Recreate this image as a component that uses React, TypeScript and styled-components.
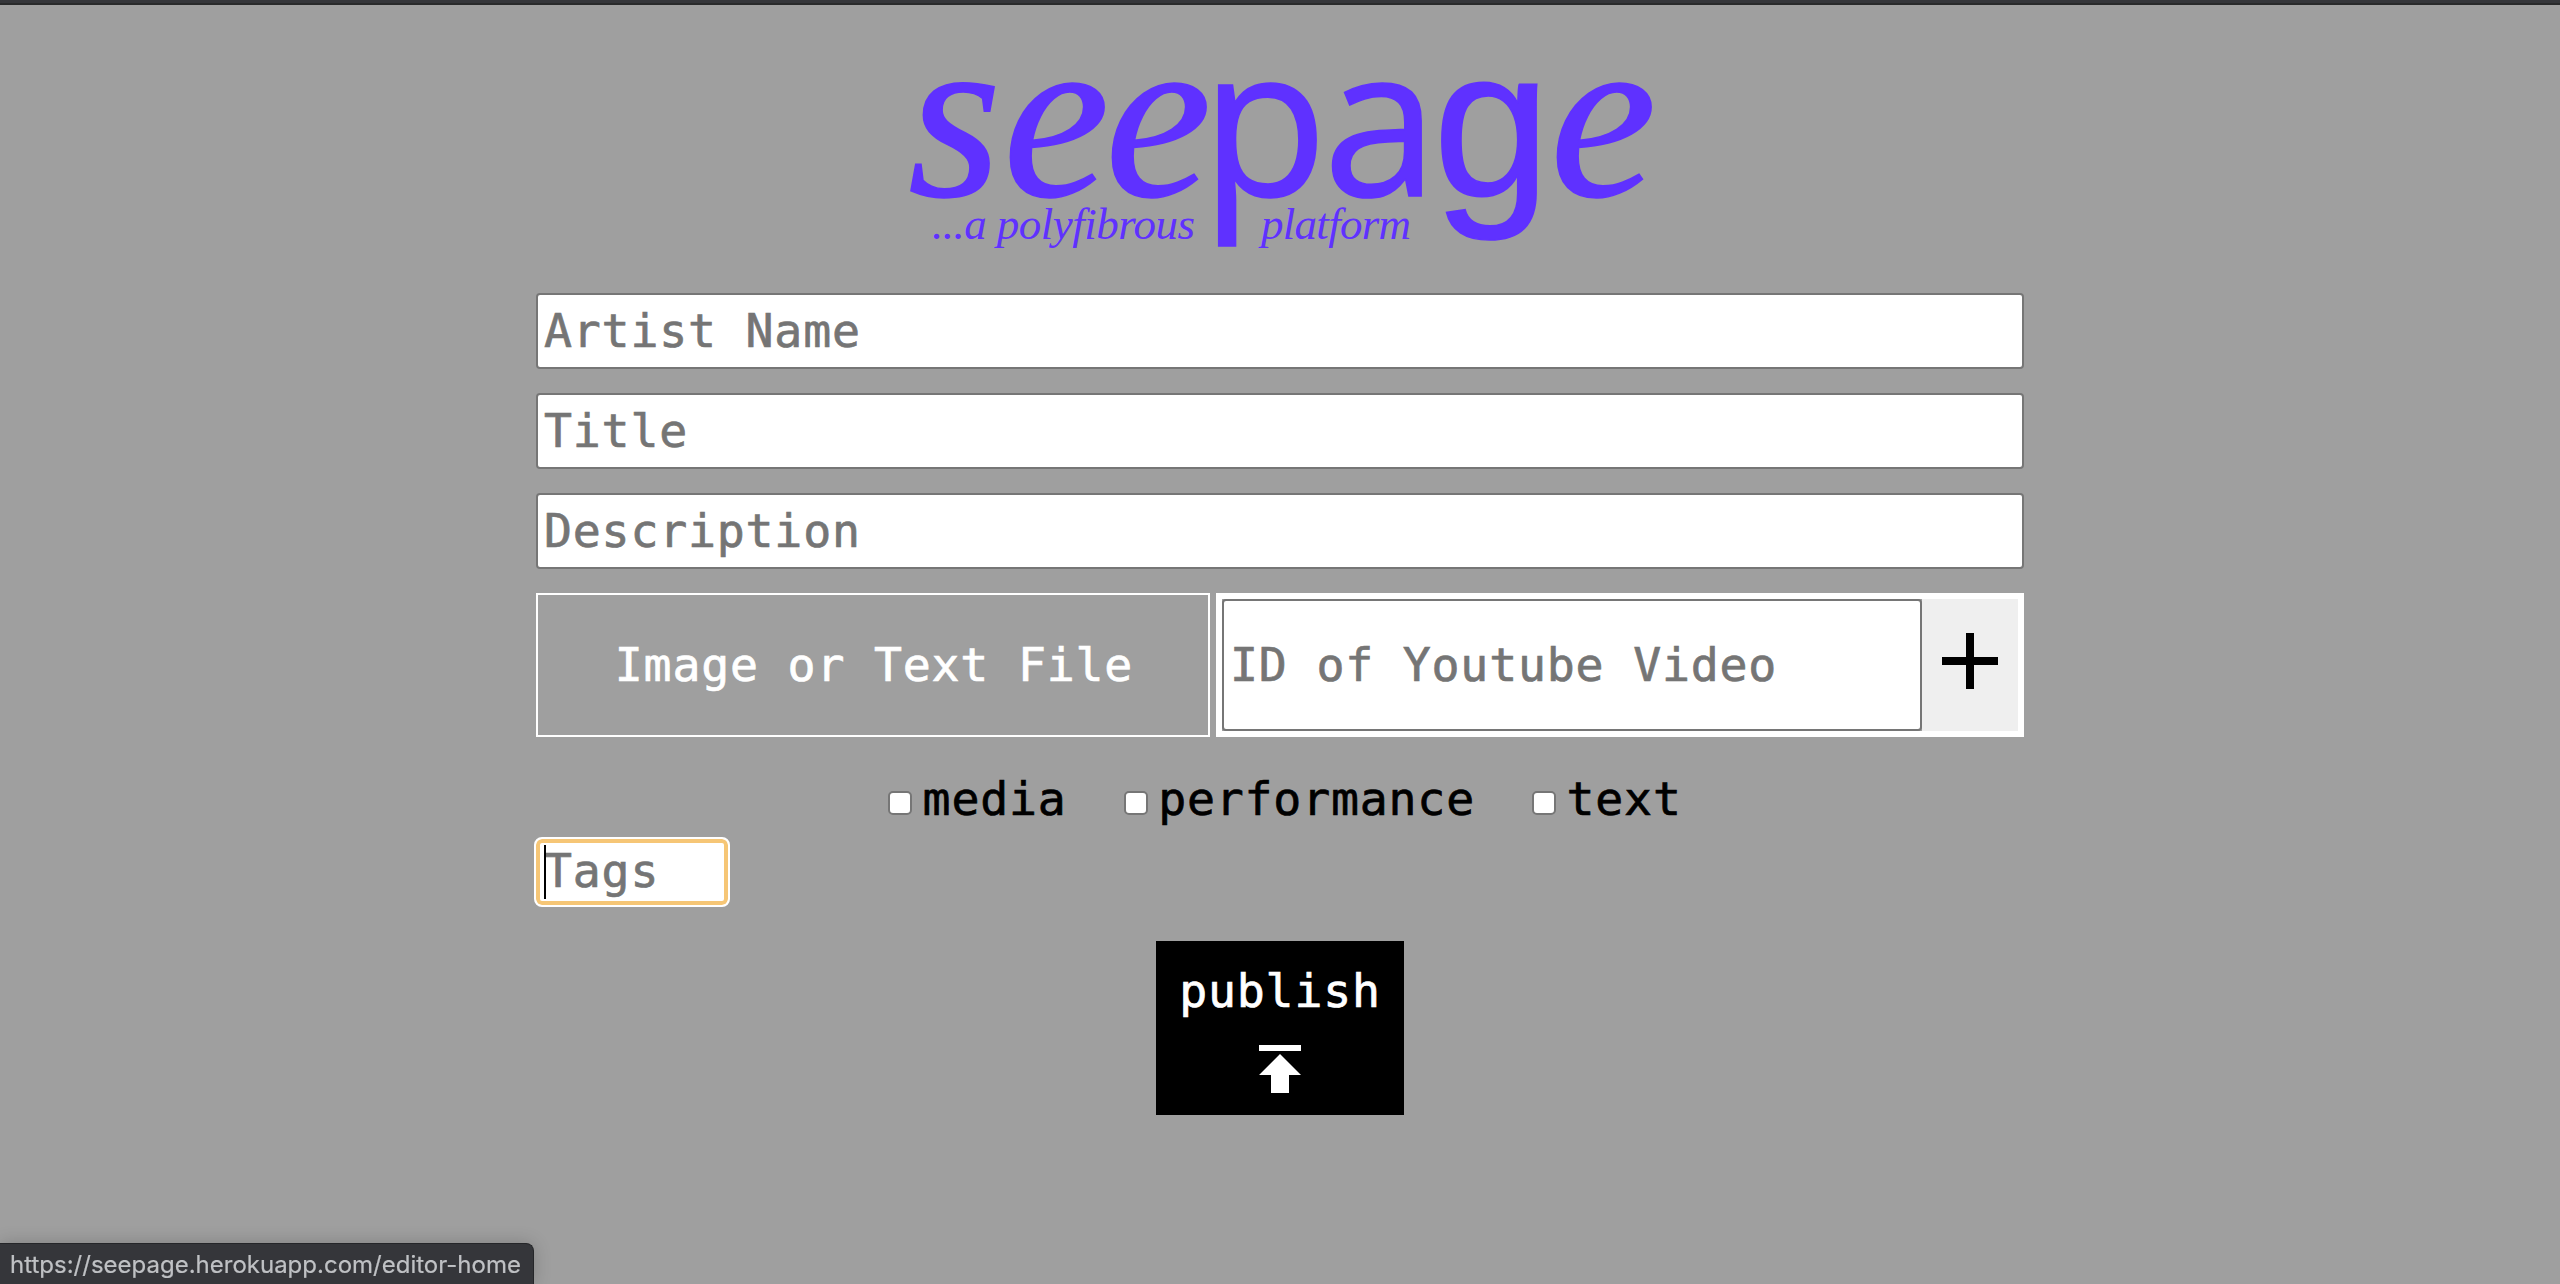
import React from "react";
import styled, { createGlobalStyle } from "styled-components";
import { MdAdd, MdPublish } from "react-icons/md";

const purple = "#5f31ff";
const mono = `"DejaVu Sans Mono", "Liberation Mono", monospace`;

const GlobalStyle = createGlobalStyle`
  *, *::before, *::after { box-sizing: border-box; }
  body { margin: 0; background: #9f9f9f; }
`;

const Page = styled.div`
  min-height: 1284px;
  display: flex;
  flex-direction: column;
  align-items: center;
  background: #9f9f9f;
  font-family: ${mono};
  font-size: 46.5px;
  letter-spacing: 0.8px;
  -webkit-text-stroke: 0.7px currentColor;
`;

const TopEdge = styled.div`
  align-self: stretch;
  height: 5px;
  background: #35363a;
  border-bottom: 2px solid #292a2b;
`;

const Logo = styled.svg`
  display: block;
  width: 760px;
  height: 200px;
  margin-top: 55px;
  overflow: visible;
  fill: ${purple};
  letter-spacing: 0;
  -webkit-text-stroke: 0;
`;

const Wordmark = styled.text`
  font-family: "Liberation Serif", "Times New Roman", serif;
  font-style: italic;
  font-size: 240px;
  stroke: ${purple};
  stroke-width: 1.5px;
`;

const Upright = styled.tspan<{ $face: string; $size: number }>`
  font-family: ${(p) => p.$face}, sans-serif;
  font-size: ${(p) => p.$size}px;
  font-style: normal;
`;

const Tagline = styled.text`
  font-family: "Liberation Serif", "Times New Roman", serif;
  font-style: italic;
  font-size: 45px;
`;

const Form = styled.form`
  width: 1488px;
  margin-top: 33px;
  display: flex;
  flex-direction: column;
`;

const Field = styled.input`
  display: block;
  width: 100%;
  height: 76px;
  margin: 0 0 24px;
  padding: 2px 6px;
  border: 2px solid #767676;
  border-radius: 4px;
  background: #fff;
  font: inherit;
  letter-spacing: inherit;
  outline: none;
  &::placeholder { color: #757575; opacity: 1; }
`;

const UploadRow = styled.div`
  display: flex;
  gap: 6px;
  height: 144px;
`;

const FileDrop = styled.label`
  width: 674px;
  display: flex;
  align-items: center;
  justify-content: center;
  padding-left: 2px;
  border: 2px solid #fff;
  color: #fff;
`;

const VideoBox = styled.div`
  flex: 1;
  display: flex;
  border: 6px solid #fff;
`;

const VideoField = styled(Field)`
  width: 700px;
  height: 132px;
  margin: 0;
`;

const AddButton = styled.button`
  width: 96px;
  padding: 0 0 8px;
  border: 0;
  background: #efefef;
  color: #000;
  display: flex;
  align-items: center;
  justify-content: center;
`;

const Categories = styled.div`
  display: flex;
  height: 100px;
  padding: 25px 0 0 352px;
`;

const Category = styled.label`
  display: flex;
  align-items: center;
  height: 74px;
  line-height: 74px;
  color: #000;
  margin-right: 57px;
`;

const Check = styled.input`
  appearance: none;
  width: 24px;
  height: 24px;
  margin: 7px 10.6px 0 0;
  border: 2px solid #767676;
  border-radius: 5px;
  background: #fff;
`;

const TagsWrap = styled.div`
  position: relative;
  width: 196px;
  height: 70px;
  margin: 0 0 0 -2px;
`;

const TagsField = styled(Field)`
  height: 70px;
  margin: 0;
  padding: 0 4px 2px 8px;
  border: 2px solid #fff;
  border-radius: 8px;
  box-shadow: inset 0 0 0 4px #f6c676;
`;

const Caret = styled.span`
  position: absolute;
  left: 10px;
  top: 8px;
  width: 2px;
  height: 54px;
  background: #000;
`;

const Publish = styled.button`
  align-self: center;
  width: 248px;
  height: 174px;
  margin-top: 34px;
  padding: 10px 0 0;
  border: 0;
  background: #000;
  color: #fff;
  font: inherit;
  letter-spacing: inherit;
  display: flex;
  flex-direction: column;
  align-items: center;
`;

const PublishLabel = styled.span`
  height: 82px;
  line-height: 80px;
`;

const StatusBubble = styled.div`
  position: fixed;
  left: 0;
  bottom: 0;
  width: 534px;
  height: 41px;
  padding-left: 10px;
  border: 1px solid #252629;
  border-width: 1px 1px 0 0;
  border-top-right-radius: 8px;
  background: #35363a;
  box-shadow: 0 0 18px rgba(0, 0, 0, 0.2);
  color: #bfc1c4;
  font: 24px/41px Inter, Roboto, sans-serif;
  letter-spacing: 0;
  white-space: nowrap;
  -webkit-text-stroke: 0.2px currentColor;
`;

const categories = ["media", "performance", "text"];

export default function App() {
  return (
    <>
      <GlobalStyle />
      <Page>
        <TopEdge />
        <Logo viewBox="900 60 760 200" aria-label="seepage">
          <Wordmark y="196">
            <tspan x="908">s</tspan>
            <tspan x="1003">e</tspan>
            <tspan x="1105">e</tspan>
            <Upright x="1201" $face='"Open Sans"' $size={207}>p</Upright>
            <Upright x="1323" $face='"Open Sans"' $size={207}>a</Upright>
            <Upright x="1433" $face='"Liberation Sans"' $size={211}>g</Upright>
            <tspan x="1550">e</tspan>
          </Wordmark>
          <Tagline x="932" y="239" textLength="263">...a polyfibrous</Tagline>
          <Tagline x="1261" y="239" textLength="150">platform</Tagline>
        </Logo>
        <Form onSubmit={(e) => e.preventDefault()}>
          <Field placeholder="Artist Name" />
          <Field placeholder="Title" />
          <Field placeholder="Description" />
          <UploadRow>
            <FileDrop>Image or Text File</FileDrop>
            <VideoBox>
              <VideoField placeholder="ID of Youtube Video" />
              <AddButton type="button" aria-label="Add">
                <MdAdd size={96} />
              </AddButton>
            </VideoBox>
          </UploadRow>
          <Categories>
            {categories.map((name) => (
              <Category key={name}>
                <Check type="checkbox" />
                {name}
              </Category>
            ))}
          </Categories>
          <TagsWrap>
            <TagsField placeholder="Tags" />
            <Caret />
          </TagsWrap>
          <Publish>
            <PublishLabel>publish</PublishLabel>
            <MdPublish size={72} />
          </Publish>
        </Form>
        <StatusBubble>https://seepage.herokuapp.com/editor-home</StatusBubble>
      </Page>
    </>
  );
}
